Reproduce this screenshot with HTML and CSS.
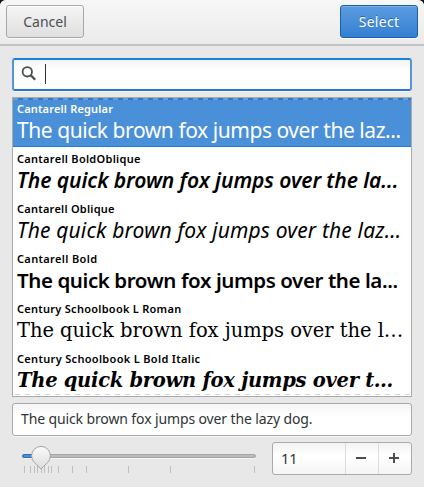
FILE: index.html
```
<!DOCTYPE html>
<html lang="en">
<head>
<meta charset="utf-8">
<title>Select Font</title>
<link rel="stylesheet" href="styles.css">
</head>
<body>
<main class="dialog">
  <header class="headerbar">
    <button class="button cancel">Cancel</button>
    <button class="button suggested">Select</button>
  </header>
  <section class="content">
    <div class="entry search">
      <svg class="search-icon" width="16" height="16" viewBox="0 0 16 16"><circle cx="6.3" cy="5.8" r="4.7" fill="none" stroke="#4a5052" stroke-width="1.8"/><path d="M9.6 9.1L14.2 13.7" stroke="#4a5052" stroke-width="2.2"/></svg>
      <span class="caret"></span>
    </div>
    <div class="font-list">
      <div class="row selected"><div class="name n1">Cantarell Regular</div><div class="preview regular">The quick brown fox jumps over the laz...</div></div>
      <div class="row"><div class="name n2">Cantarell BoldOblique</div><div class="preview bold-oblique">The quick brown fox jumps over the la...</div></div>
      <div class="row"><div class="name n3">Cantarell Oblique</div><div class="preview oblique">The quick brown fox jumps over the laz...</div></div>
      <div class="row"><div class="name n4">Cantarell Bold</div><div class="preview bold">The quick brown fox jumps over the la...</div></div>
      <div class="row"><div class="name n5">Century Schoolbook L Roman</div><div class="preview century">The quick brown fox jumps over the l…</div></div>
      <div class="row"><div class="name n6">Century Schoolbook L Bold Italic</div><div class="preview century century-bold">The quick brown fox jumps over t…</div></div>
    </div>
    <div class="entry sample"><span>The quick brown fox jumps over the lazy dog.</span></div>
    <div class="size-row">
      <svg class="scale" width="260" height="33" viewBox="12 442 260 33">
        <defs>
          <linearGradient id="knob" x1="0" y1="0" x2="0" y2="1"><stop offset="0" stop-color="#fafafa"/><stop offset="1" stop-color="#dcdcdc"/></linearGradient>
        </defs>
        <path d="M24 458.5H255" stroke="#f6f6f6"/>
        <rect x="22.5" y="454.5" width="233" height="3" rx="1.5" fill="#bcbcbc" stroke="#a5a5a5"/>
        <path d="M38 454.5H24Q22.5 454.5 22.5 456T24 457.5H38Z" fill="#4a90d9" stroke="#2f70b4"/>
        <path d="M24.5 466v7M30.5 466v7M34.5 466v7M37.5 466v7M41.5 466v7M44.5 466v7M48.5 466v7M51.5 466v7M58.5 466v7M72.5 466v7M86.5 466v7M128.5 466v7M170.5 466v7M254.5 466v7" stroke="#bebebe"/>
        <path d="M41 469L34.3 462.4A9.4 9.4 0 1 1 47.7 462.4Z" fill="url(#knob)" stroke="#a3a3a3"/>
      </svg>
      <div class="spin">
        <span class="value">11</span>
        <span class="step"><svg width="12" height="12" viewBox="0 0 12 12"><path d="M1 6H11" stroke="#4a5052" stroke-width="2"/></svg></span>
        <span class="step"><svg width="12" height="12" viewBox="0 0 12 12"><path d="M1 6H11M6 1V11" stroke="#4a5052" stroke-width="2"/></svg></span>
      </div>
    </div>
  </section>
</main>
</body>
</html>
```
FILE: styles.css
```
* { box-sizing: border-box; }
body { margin: 0; background: #17151b; font-family: "Noto Sans", "Open Sans", sans-serif; font-size: 14px; color: #2e3436; }
.dialog { width: 424px; height: 487px; background: #e8e8e8; border-radius: 6px 6px 0 0; overflow: hidden; }
.headerbar { height: 46px; padding: 5px 6px 0; display: flex; justify-content: space-between; align-items: flex-start; background: linear-gradient(#f7f7f7, #ebebeb); border-bottom: 2px solid #c1c1c1; }
.button { width: 78px; height: 33px; padding: 0; border: 1px solid #a8a8a8; border-radius: 3px; background: linear-gradient(#f5f5f5, #dfdfdf); box-shadow: inset 0 1px #fff, 0 1px #fbfbfb; font: inherit; color: #4a5052; line-height: 29px; }
.button.suggested { border-color: #1c5fa8; background: linear-gradient(#5b9ce0, #3580d2); box-shadow: inset 0 1px #7cb2e8, 0 1px #fbfbfb; color: #fff; text-shadow: 0 -1px #2b69ad; letter-spacing: .3px; }
.content { padding: 12px 12px 0; }
.entry { height: 33px; display: flex; align-items: center; border: 1px solid #aaa; border-radius: 3px; background: linear-gradient(#f5f5f5, #fff 40%); box-shadow: 0 1px #f6f6f6; }
.search { border: 2px solid #2380dd; border-color: #1680df #5396dc #2677cd; padding: 0 0 2px 7px; }
.search-icon { flex: none; }
.caret { width: 1px; height: 20px; margin-left: 8px; background: #2e3436; }
.font-list { height: 300px; margin-top: 6px; border: 1px solid #aaa; background: repeating-linear-gradient(90deg, #d4d4d4 0 5px, #fff 5px 10px) 2px 296px / 100% 1px no-repeat, #fff; overflow: hidden; }
.row { height: 50px; padding: 3px 4px 0; color: #000; white-space: nowrap; }
.row.selected { height: 49px; margin-bottom: 1px; color: #fff; border-bottom: 1px solid #1b7ed8; background: repeating-linear-gradient(90deg, #64a0de 0 5px, #357ac1 5px 10px) 0 0 / 100% 2px no-repeat, #4a90d9; }
.name { height: 15px; line-height: 15px; font-size: 11px; font-weight: 600; width: max-content; }
.n1 { letter-spacing: .17px; }
.n2 { letter-spacing: .29px; }
.n3 { letter-spacing: .25px; }
.n4 { letter-spacing: .35px; }
.n5 { letter-spacing: .27px; }
.n6 { letter-spacing: .32px; }
.preview { height: 29px; line-height: 29px; font-size: 21px; width: max-content; }
.regular { letter-spacing: -.44px; }
.bold-oblique { font-weight: 600; font-style: italic; letter-spacing: -.08px; }
.bold { font-weight: 600; font-size: 20.5px; letter-spacing: -.41px; }
.oblique { font-style: italic; letter-spacing: .15px; }
.century { font-family: "DejaVu Serif", serif; font-size: 19.5px; letter-spacing: -.05px; }
.century-bold { font-weight: 700; font-style: italic; letter-spacing: -.28px; }
.sample { margin-top: 6px; padding: 0 9px 2px 8px; letter-spacing: -.12px; }
.size-row { display: flex; margin-top: 6px; }
.scale { flex: none; }
.spin { width: 140px; height: 33px; display: grid; grid-template-columns: 1fr 33px 33px; border: 1px solid #aaa; border-radius: 3px; background: linear-gradient(#f3f3f3, #fff 40%, #f5f5f5); }
.value { padding-left: 8px; line-height: 30px; font-size: 14.5px; }
.step { display: grid; place-items: center; padding: 0 2px 1px 0; border-left: 1px solid #dcdcdc; }
```
